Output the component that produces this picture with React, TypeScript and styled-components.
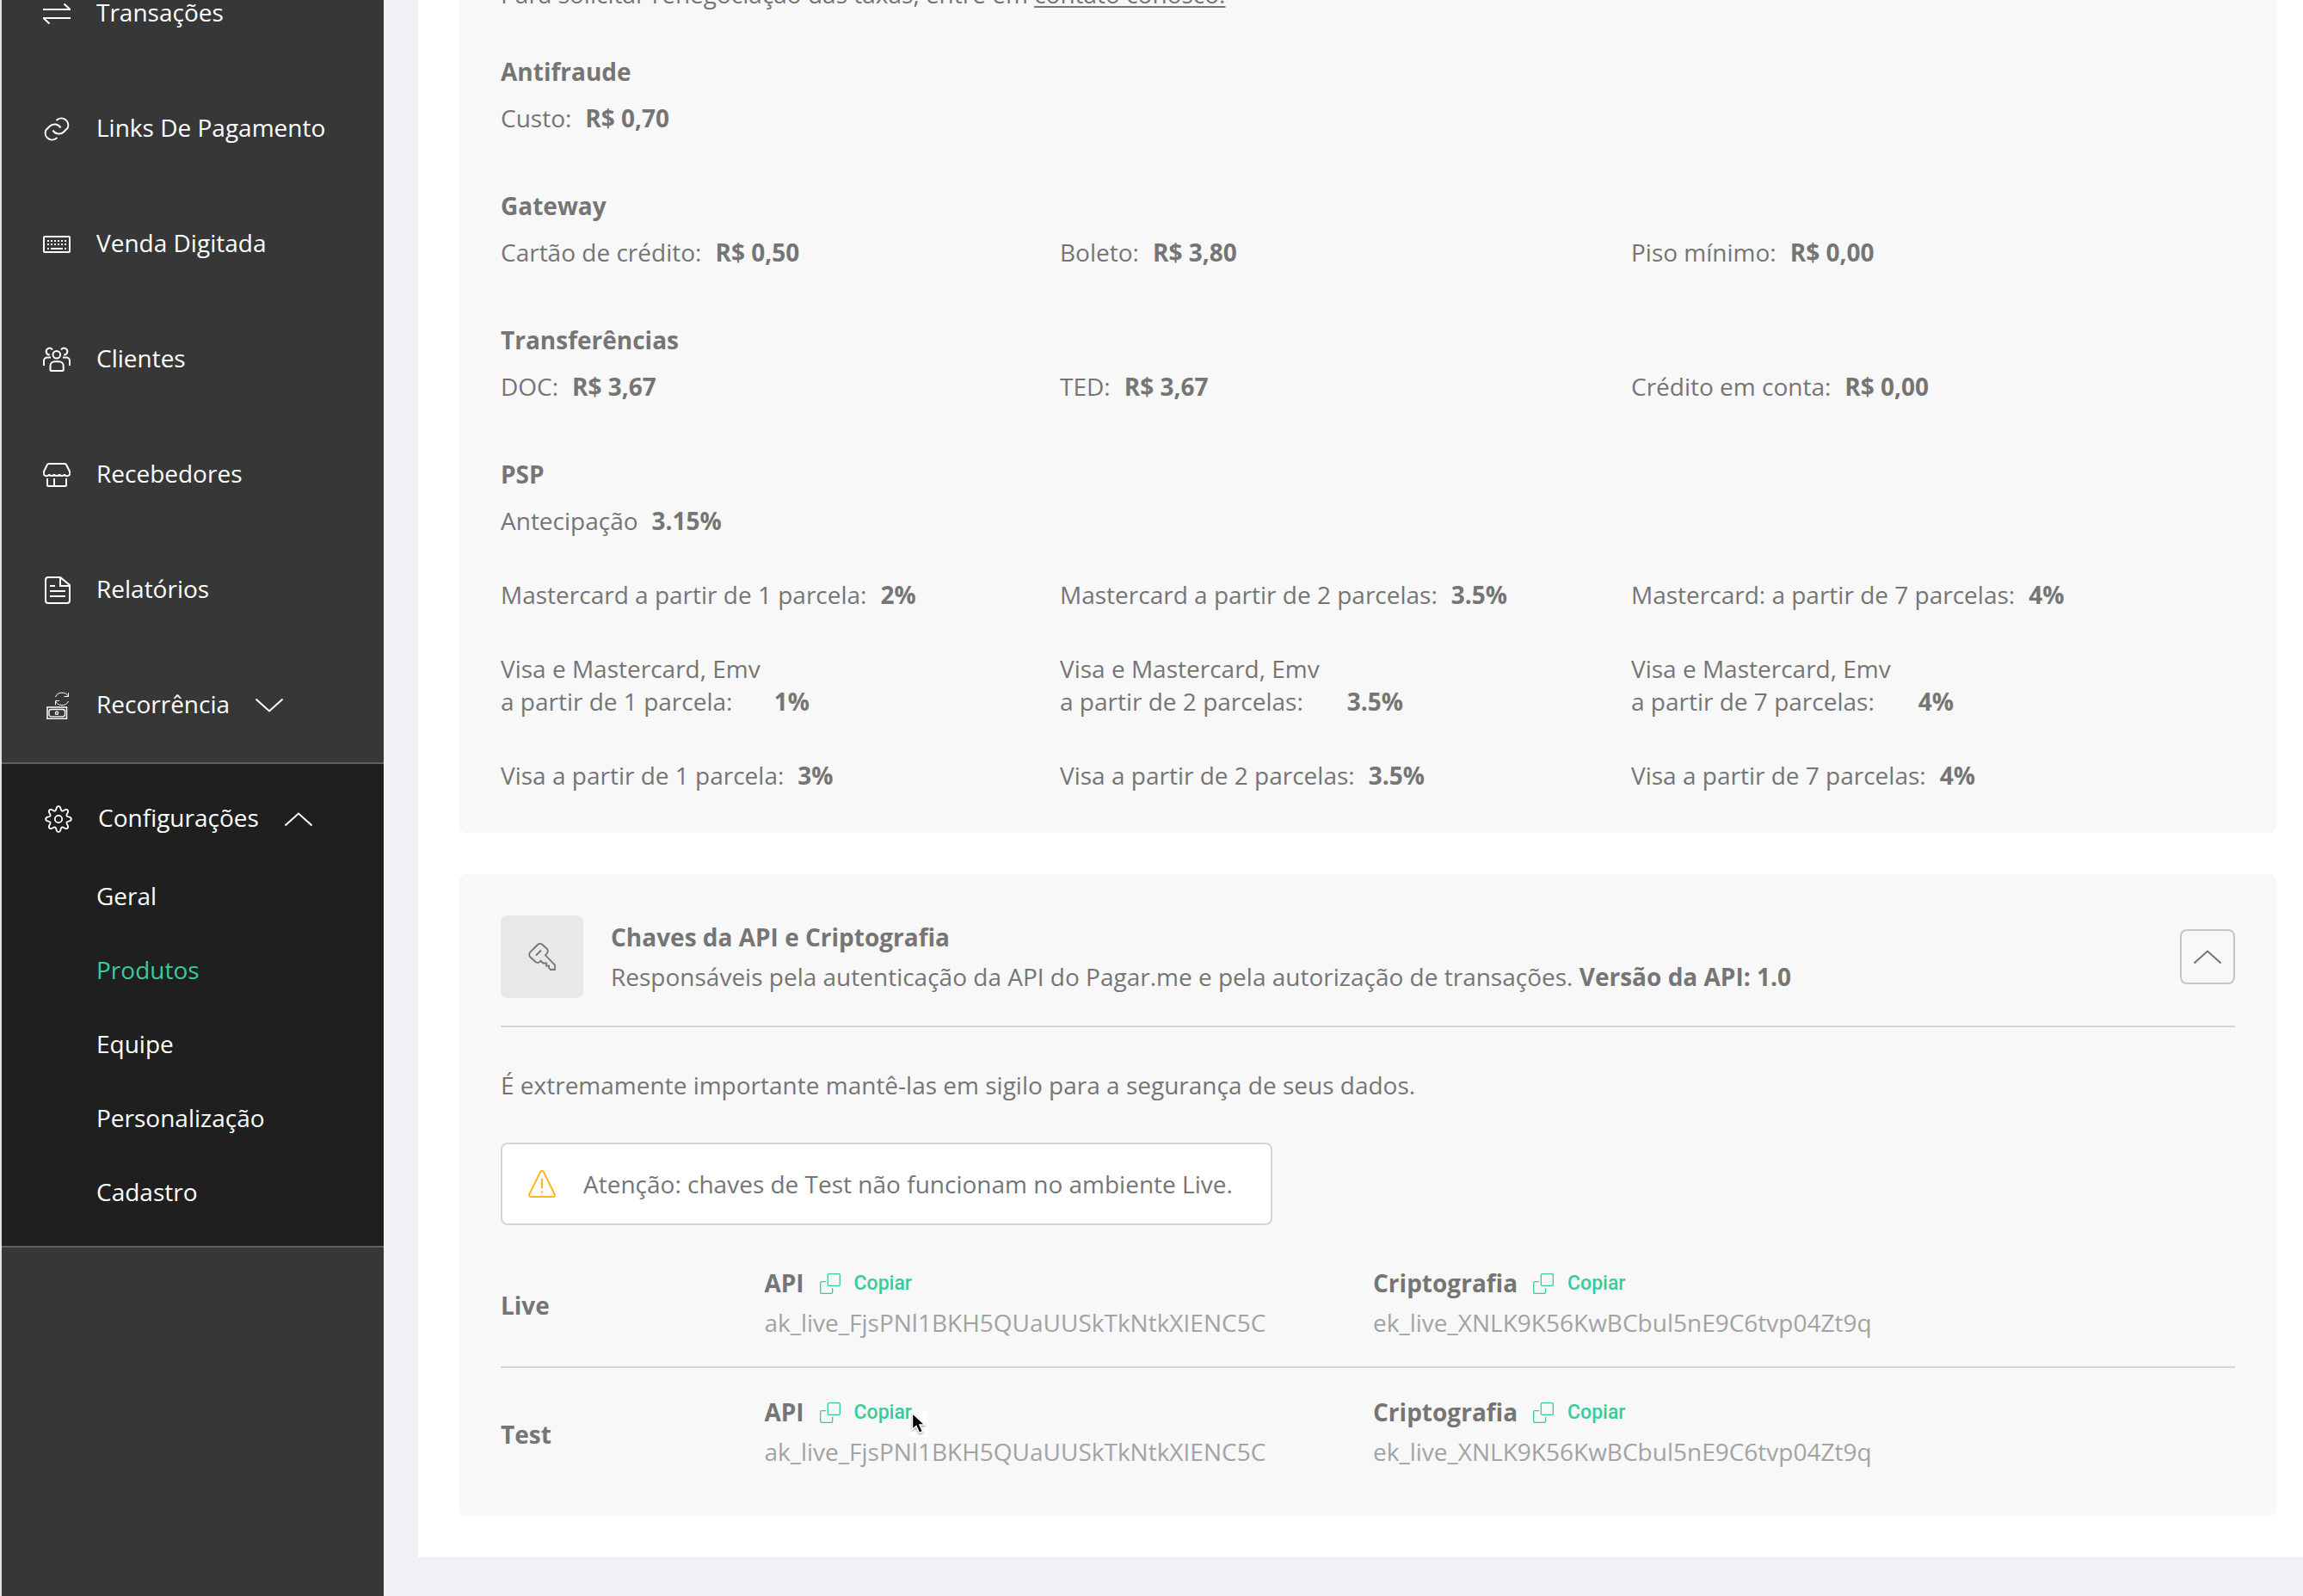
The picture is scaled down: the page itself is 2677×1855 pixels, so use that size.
import React from 'react';
import styled, { createGlobalStyle } from 'styled-components';

const colors = {
  page: '#f0f1f4',
  sidebar: '#373737',
  sidebarOpen: '#1e1f1e',
  sidebarLine: '#5f6161',
  green: '#37cc9a',
  text: '#757575',
  muted: '#a3a3a3',
  card: '#f8f8f8',
  line: '#d2d6da',
  warning: '#ffb61e',
};

const GlobalStyle = createGlobalStyle`
  *, *::before, *::after { box-sizing: border-box; }
  body {
    margin: 0;
    background: ${colors.page};
    color: ${colors.text};
    font: 400 28px/38px "Open Sans", "Noto Sans", sans-serif;
  }
  h2, h3, p, dl, dd, ul { margin: 0; padding: 0; font-size: inherit; }
  ul { list-style: none; }
  a { color: inherit; text-decoration: none; }
  button { font: inherit; color: inherit; background: none; border: 0; padding: 0; cursor: pointer; }
`;

const Page = styled.div`
  display: flex;
  gap: 40px;
  height: 100vh;
  overflow: hidden;
`;

/* ---------- Sidebar ---------- */

const Sidebar = styled.nav`
  flex: 0 0 446px;
  border-left: 2px solid #e2e2e2;
  background: ${colors.sidebar};
  color: #fff;
  overflow: hidden;
`;

const MenuList = styled.ul`
  margin-top: -53px;
  padding-bottom: 1px;
`;

const menuRow = `
  display: flex;
  align-items: center;
  gap: 30px;
  width: 100%;
  padding-left: 48px;
`;

const MenuLink = styled.a`
  ${menuRow}
  height: 134px;
`;

const MenuToggle = styled.button<{ $open?: boolean }>`
  ${menuRow}
  height: ${(p) => (p.$open ? 96 : 134)}px;
  padding-left: ${(p) => (p.$open ? 50 : 48)}px;
`;

const MenuIcon = styled.svg`
  flex: none;
  width: 32px;
  height: 32px;
  margin-top: 4px;
  fill: none;
  stroke: currentColor;
  stroke-width: 2;
`;

const OpenGroup = styled.div`
  padding: 14px 0 20px;
  background: ${colors.sidebarOpen};
  border-top: 2px solid ${colors.sidebarLine};
  border-bottom: 2px solid ${colors.sidebarLine};
`;

const SubLink = styled.a<{ $active?: boolean }>`
  display: flex;
  align-items: center;
  height: 86px;
  padding-left: 110px;
  color: ${(p) => (p.$active ? colors.green : '#fff')};
`;

const ChevronSvg = styled.svg`
  width: 32px;
  height: 16px;
  fill: none;
  stroke: currentColor;
  stroke-width: 2;

  ${MenuToggle} & { margin-top: 4px; }
`;

/* ---------- Content ---------- */

const Content = styled.main`
  flex: 1;
  align-self: flex-start;
  display: flex;
  flex-direction: column;
  gap: 48px;
  margin-top: -74px;
  padding: 0 31px 48px 48px;
  background: #fff;
`;

const Card = styled.section`
  padding: 48px;
  border-radius: 8px;
  background: ${colors.card};
`;

const KeysCard = styled(Card)`
  padding-bottom: 24px;
`;

const ContactLink = styled.a`
  text-decoration: underline;
  text-decoration-thickness: 2px;
  text-underline-offset: 3px;
`;

const FeeIntro = styled.p`
  margin-bottom: 52px;
`;

const FeeGroup = styled.section`
  & + & { margin-top: 64px; }
`;

const GroupTitle = styled.h3`
  margin-bottom: 16px;
  font-weight: 700;
`;

const FeeList = styled.dl`
  display: grid;
  grid-template-columns: 325fr 332fr 351fr;
  & + & { margin-top: 48px; }
`;

const Fee = styled.div<{ $wide?: boolean }>`
  display: flex;
  align-items: flex-end;
  gap: ${(p) => (p.$wide ? 32 : 16)}px;
`;

const FeeValue = styled.dd`
  font-weight: 700;
`;

const CardHeader = styled.header`
  display: flex;
  align-items: center;
  gap: 32px;
  padding-bottom: 32px;
  border-bottom: 2px solid ${colors.line};
`;

const IconTile = styled.span`
  display: grid;
  place-items: center;
  width: 96px;
  height: 96px;
  border-radius: 8px;
  background: #e8e8e8;
`;

const LineIcon = styled.svg<{ $size: number }>`
  flex: none;
  width: ${(p) => p.$size}px;
  height: ${(p) => p.$size}px;
  fill: none;
  stroke: currentColor;
  stroke-width: 2;
`;

const HeaderText = styled.div`
  flex: 1;
  display: grid;
  gap: 8px;
`;

const CardTitle = styled.h2`
  font-weight: 700;
`;

const CollapseButton = styled.button`
  display: grid;
  place-items: center;
  width: 64px;
  height: 64px;
  border: 2px solid #c5c5ca;
  border-radius: 8px;
`;

const Notice = styled.p`
  margin: 48px 0;
`;

const Alert = styled.div`
  display: inline-flex;
  align-items: center;
  gap: 32px;
  height: 96px;
  padding: 0 44px 0 30px;
  border: 2px solid ${colors.line};
  border-radius: 8px;
  background: #fff;
  vertical-align: top;

  svg { color: ${colors.warning}; }
`;

const KeyTable = styled.table`
  width: 100%;
  margin-top: 16px;
  table-layout: fixed;
  border-collapse: separate;
  border-spacing: 0;
`;

const KeyRow = styled.tr`
  & + & > * { border-top: 2px solid ${colors.line}; }
`;

const EnvCell = styled.th`
  width: 15.2%;
  padding: 6px 0 0;
  text-align: left;
  font-weight: 700;
`;

const KeyCell = styled.td<{ $width?: string }>`
  width: ${(p) => p.$width ?? 'auto'};
  padding: 32px 0;
`;

const KeyHead = styled.div`
  display: flex;
  align-items: center;
  gap: 18px;
  margin-bottom: 8px;
`;

const KeyName = styled.strong`
  font-weight: 700;
`;

const CopyButton = styled.button`
  position: relative;
  display: flex;
  align-items: center;
  gap: 16px;
  padding-top: 2px;
  color: ${colors.green};
  font-family: Roboto, sans-serif;
  font-size: 23px;
  font-weight: 500;
  line-height: 36px;
`;

const KeyValue = styled.div`
  color: ${colors.muted};
`;

const Pointer = styled.svg`
  position: absolute;
  left: 104px;
  top: 18px;
  width: 22px;
  height: 30px;
`;

/* ---------- Icons ---------- */

const gearPath = (() => {
  const points: string[] = [];
  for (let i = 0; i < 160; i++) {
    const a = (i / 160) * Math.PI * 2;
    const wave = Math.cos(a * 8);
    const r = 12.6 + 2.3 * (wave > 0 ? Math.pow(wave, 0.7) : -Math.pow(-wave, 0.8));
    points.push(`${(16 + r * Math.cos(a)).toFixed(2)} ${(16 + r * Math.sin(a)).toFixed(2)}`);
  }
  return `M${points.join('L')}Z`;
})();

const icons = {
  transfer: <path d="M0 11H32M24.5 4.5L31 10.5M0 21H32M7.5 27.5L1 21.5" />,
  link: (
    <path d="M15.6 6A8 8 0 0 1 28.7 14.7L24.2 19.2A8 8 0 0 1 11.5 17.4M16.4 26A8 8 0 0 1 3.3 17.3L7.8 12.8A8 8 0 0 1 20.5 14.6" />
  ),
  keyboard: (
    <>
      <rect x="1" y="7" width="30" height="18" rx="1" />
      <path d="M5 12H27M5 16H27" strokeDasharray="2 2" />
      <path d="M5 21H7M9 21H23M25 21H27" />
    </>
  ),
  people: (
    <>
      <circle cx="15.8" cy="10.3" r="4.3" />
      <path d="M8.5 28V23C8.5 20 11 18.2 13.5 18.2H18.5C21 18.2 23.7 20 23.7 23V28A1 1 0 0 1 22.7 29H9.5A1 1 0 0 1 8.5 28Z" />
      <path d="M11 4.6A3.9 3.9 0 1 0 7.8 10.4M21 4.6A3.9 3.9 0 1 1 24.2 10.4" />
      <path d="M1 23V17.5C1 15 3 13.6 5 13.6H9M31 23V17.5C31 15 29 13.6 27 13.6H23" />
    </>
  ),
  store: (
    <>
      <path d="M1 14.5V12L5 4Q5.5 3 6.5 3H25.5Q26.5 3 27 4L31 12V14.5" />
      <path d="M1 14.5a3 2.5 0 0 0 6 .5a3 2 0 0 0 6 0a3 2 0 0 0 6 0a3 2 0 0 0 6 0a3 2.5 0 0 0 6 -.5" />
      <path d="M5 20V28A1 1 0 0 0 6 29H26A1 1 0 0 0 27 28V20M13 20V29" />
    </>
  ),
  report: (
    <path d="M20 1H6A3 3 0 0 0 3 4V28A3 3 0 0 0 6 31H28A3 3 0 0 0 31 28V10ZM20 1V11H31M8 11H14M8 17H26M8 23H26" />
  ),
  recurrence: (
    <>
      <path strokeWidth="1" d="M14.5 6A8 7 0 0 1 29.5 5.5M29.5 1V5.5H24.5M29.5 11A8 7 0 0 1 14.5 11M14.5 15.5V10.5H19" />
      <rect strokeWidth="1.5" x="5" y="18" width="22.5" height="13.3" />
      <rect strokeWidth="1.3" x="7" y="20.5" width="18.5" height="8.3" rx="2.5" />
      <circle strokeWidth="1.3" cx="16" cy="24.7" r="1.6" />
    </>
  ),
  gear: (
    <>
      <path strokeWidth="1.8" d={gearPath} />
      <circle strokeWidth="1.8" cx="16" cy="16" r="4.2" />
    </>
  ),
};

const Chevron = ({ up = false }: { up?: boolean }) => (
  <ChevronSvg viewBox="0 0 32 16" aria-hidden="true">
    <path d={up ? 'M.5 15.5L16 1.5L31.5 15.5' : 'M.5 .5L16 14.5L31.5 .5'} />
  </ChevronSvg>
);

const KeyIcon = () => (
  <LineIcon $size={32} viewBox="0 0 32 32" aria-hidden="true">
    <path
      strokeWidth="1.8"
      d="M10.5 2.5Q13.5 -.5 16.5 2L21.5 6.5Q23.5 8.5 22.5 11L20 14.3L31 25.7V31H26L24 29V26.5H21V23.5H17.5L14.5 20.8L12.5 22.5Q10.5 23.5 8.5 22L2.5 16.5Q0 14 2.3 10.5Z"
    />
    <path d="M9 14.5L15 8.5" />
  </LineIcon>
);

const WarningIcon = () => (
  <LineIcon $size={32} viewBox="0 0 32 32" aria-hidden="true">
    <path d="M14 2.2Q16 -.4 18 2.2L30.6 28Q31.6 31 28.6 31H3.4Q.4 31 1.4 28Z" />
    <path d="M16 10V21M16 24.5V26.5" />
  </LineIcon>
);

const CopyIcon = () => (
  <LineIcon $size={24} viewBox="0 0 24 24" aria-hidden="true">
    <rect strokeWidth="1.3" x="9.3" y=".7" width="14" height="13.6" rx="1" />
    <path strokeWidth="1.3" d="M7 9.7H2A1.3 1.3 0 0 0 .7 11V22A1.3 1.3 0 0 0 2 23.3H13.3A1.3 1.3 0 0 0 14.6 22V17" />
  </LineIcon>
);

/* ---------- Data ---------- */

const menu: { label: string; icon: keyof typeof icons }[] = [
  { label: 'Transações', icon: 'transfer' },
  { label: 'Links De Pagamento', icon: 'link' },
  { label: 'Venda Digitada', icon: 'keyboard' },
  { label: 'Clientes', icon: 'people' },
  { label: 'Recebedores', icon: 'store' },
  { label: 'Relatórios', icon: 'report' },
];

const settings = ['Geral', 'Produtos', 'Equipe', 'Personalização', 'Cadastro'];

type FeeItem = { lines: string[]; value: string; wide?: boolean };

const fee = (label: string, value: string, wide = false): FeeItem => ({
  lines: label.split('\n'),
  value,
  wide,
});

const feeGroups: { title: string; rows: FeeItem[][] }[] = [
  { title: 'Antifraude', rows: [[fee('Custo:', 'R$ 0,70')]] },
  {
    title: 'Gateway',
    rows: [[fee('Cartão de crédito:', 'R$ 0,50'), fee('Boleto:', 'R$ 3,80'), fee('Piso mínimo:', 'R$ 0,00')]],
  },
  {
    title: 'Transferências',
    rows: [[fee('DOC:', 'R$ 3,67'), fee('TED:', 'R$ 3,67'), fee('Crédito em conta:', 'R$ 0,00')]],
  },
  {
    title: 'PSP',
    rows: [
      [fee('Antecipação', '3.15%')],
      [
        fee('Mastercard a partir de 1 parcela:', '2%'),
        fee('Mastercard a partir de 2 parcelas:', '3.5%'),
        fee('Mastercard: a partir de 7 parcelas:', '4%'),
      ],
      [
        fee('Visa e Mastercard, Emv\na partir de 1 parcela:', '1%'),
        fee('Visa e Mastercard, Emv\na partir de 2 parcelas:', '3.5%', true),
        fee('Visa e Mastercard, Emv\na partir de 7 parcelas:', '4%', true),
      ],
      [
        fee('Visa a partir de 1 parcela:', '3%'),
        fee('Visa a partir de 2 parcelas:', '3.5%'),
        fee('Visa a partir de 7 parcelas:', '4%'),
      ],
    ],
  },
];

const apiKey = 'ak_live_FjsPNl1BKH5QUaUUSkTkNtkXIENC5C';
const cryptoKey = 'ek_live_XNLK9K56KwBCbul5nE9C6tvp04Zt9q';

/* ---------- Parts ---------- */

const NavIcon = ({ name }: { name: keyof typeof icons }) => (
  <MenuIcon viewBox="0 0 32 32" aria-hidden="true">{icons[name]}</MenuIcon>
);

const PointerArrow = styled.path`
  fill: #000;
  stroke: #fff;
  stroke-width: 1.5px;
  filter: drop-shadow(0 1px 1px rgba(0, 0, 0, 0.45));
`;

const KeyEntry = ({ name, value, hovered = false }: { name: string; value: string; hovered?: boolean }) => (
  <>
    <KeyHead>
      <KeyName>{name}</KeyName>
      <CopyButton type="button">
        <CopyIcon />
        Copiar
        {hovered && (
          <Pointer viewBox="0 0 22 30" aria-hidden="true">
            <rect width="22" height="30" fill="#fff" />
            <PointerArrow d="M3.5 2.5V21.5L8 17.5L11.5 25.5L15.5 23.8L12 16H18Z" />
          </Pointer>
        )}
      </CopyButton>
    </KeyHead>
    <KeyValue>{value}</KeyValue>
  </>
);

export default function App() {
  return (
    <>
      <GlobalStyle />
      <Page>
        <Sidebar>
          <MenuList>
            {menu.map((item) => (
              <li key={item.label}>
                <MenuLink href="#">
                  <NavIcon name={item.icon} />
                  {item.label}
                </MenuLink>
              </li>
            ))}
            <li>
              <MenuToggle type="button" aria-expanded={false}>
                <NavIcon name="recurrence" />
                Recorrência
                <Chevron />
              </MenuToggle>
            </li>
          </MenuList>
          <OpenGroup>
            <MenuToggle type="button" $open aria-expanded>
              <NavIcon name="gear" />
              Configurações
              <Chevron up />
            </MenuToggle>
            <ul>
              {settings.map((label) => (
                <li key={label}>
                  <SubLink href="#" $active={label === 'Produtos'}>{label}</SubLink>
                </li>
              ))}
            </ul>
          </OpenGroup>
        </Sidebar>

        <Content>
          <Card>
            <FeeIntro>
              Para solicitar renegociação das taxas, entre em <ContactLink href="#">contato conosco.</ContactLink>
            </FeeIntro>
            {feeGroups.map((group) => (
              <FeeGroup key={group.title}>
                <GroupTitle>{group.title}</GroupTitle>
                {group.rows.map((row, i) => (
                  <FeeList key={i}>
                    {row.map((item) => (
                      <Fee key={item.lines.join(' ')} $wide={item.wide}>
                        <dt>
                          {item.lines.map((line, n) => (
                            <React.Fragment key={line}>
                              {n > 0 && <br />}
                              {line}
                            </React.Fragment>
                          ))}
                        </dt>
                        <FeeValue>{item.value}</FeeValue>
                      </Fee>
                    ))}
                  </FeeList>
                ))}
              </FeeGroup>
            ))}
          </Card>

          <KeysCard>
            <CardHeader>
              <IconTile><KeyIcon /></IconTile>
              <HeaderText>
                <CardTitle>Chaves da API e Criptografia</CardTitle>
                <p>
                  Responsáveis pela autenticação da API do Pagar.me e pela autorização de transações.{' '}
                  <strong>Versão da API: 1.0</strong>
                </p>
              </HeaderText>
              <CollapseButton type="button" aria-label="Recolher" aria-expanded>
                <Chevron up />
              </CollapseButton>
            </CardHeader>
            <Notice>É extremamente importante mantê-las em sigilo para a segurança de seus dados.</Notice>
            <Alert role="note">
              <WarningIcon />
              Atenção: chaves de Test não funcionam no ambiente Live.
            </Alert>
            <KeyTable>
              <tbody>
                {['Live', 'Test'].map((env) => (
                  <KeyRow key={env}>
                    <EnvCell scope="row">{env}</EnvCell>
                    <KeyCell $width="35.1%">
                      <KeyEntry name="API" value={apiKey} hovered={env === 'Test'} />
                    </KeyCell>
                    <KeyCell>
                      <KeyEntry name="Criptografia" value={cryptoKey} />
                    </KeyCell>
                  </KeyRow>
                ))}
              </tbody>
            </KeyTable>
          </KeysCard>
        </Content>
      </Page>
    </>
  );
}
